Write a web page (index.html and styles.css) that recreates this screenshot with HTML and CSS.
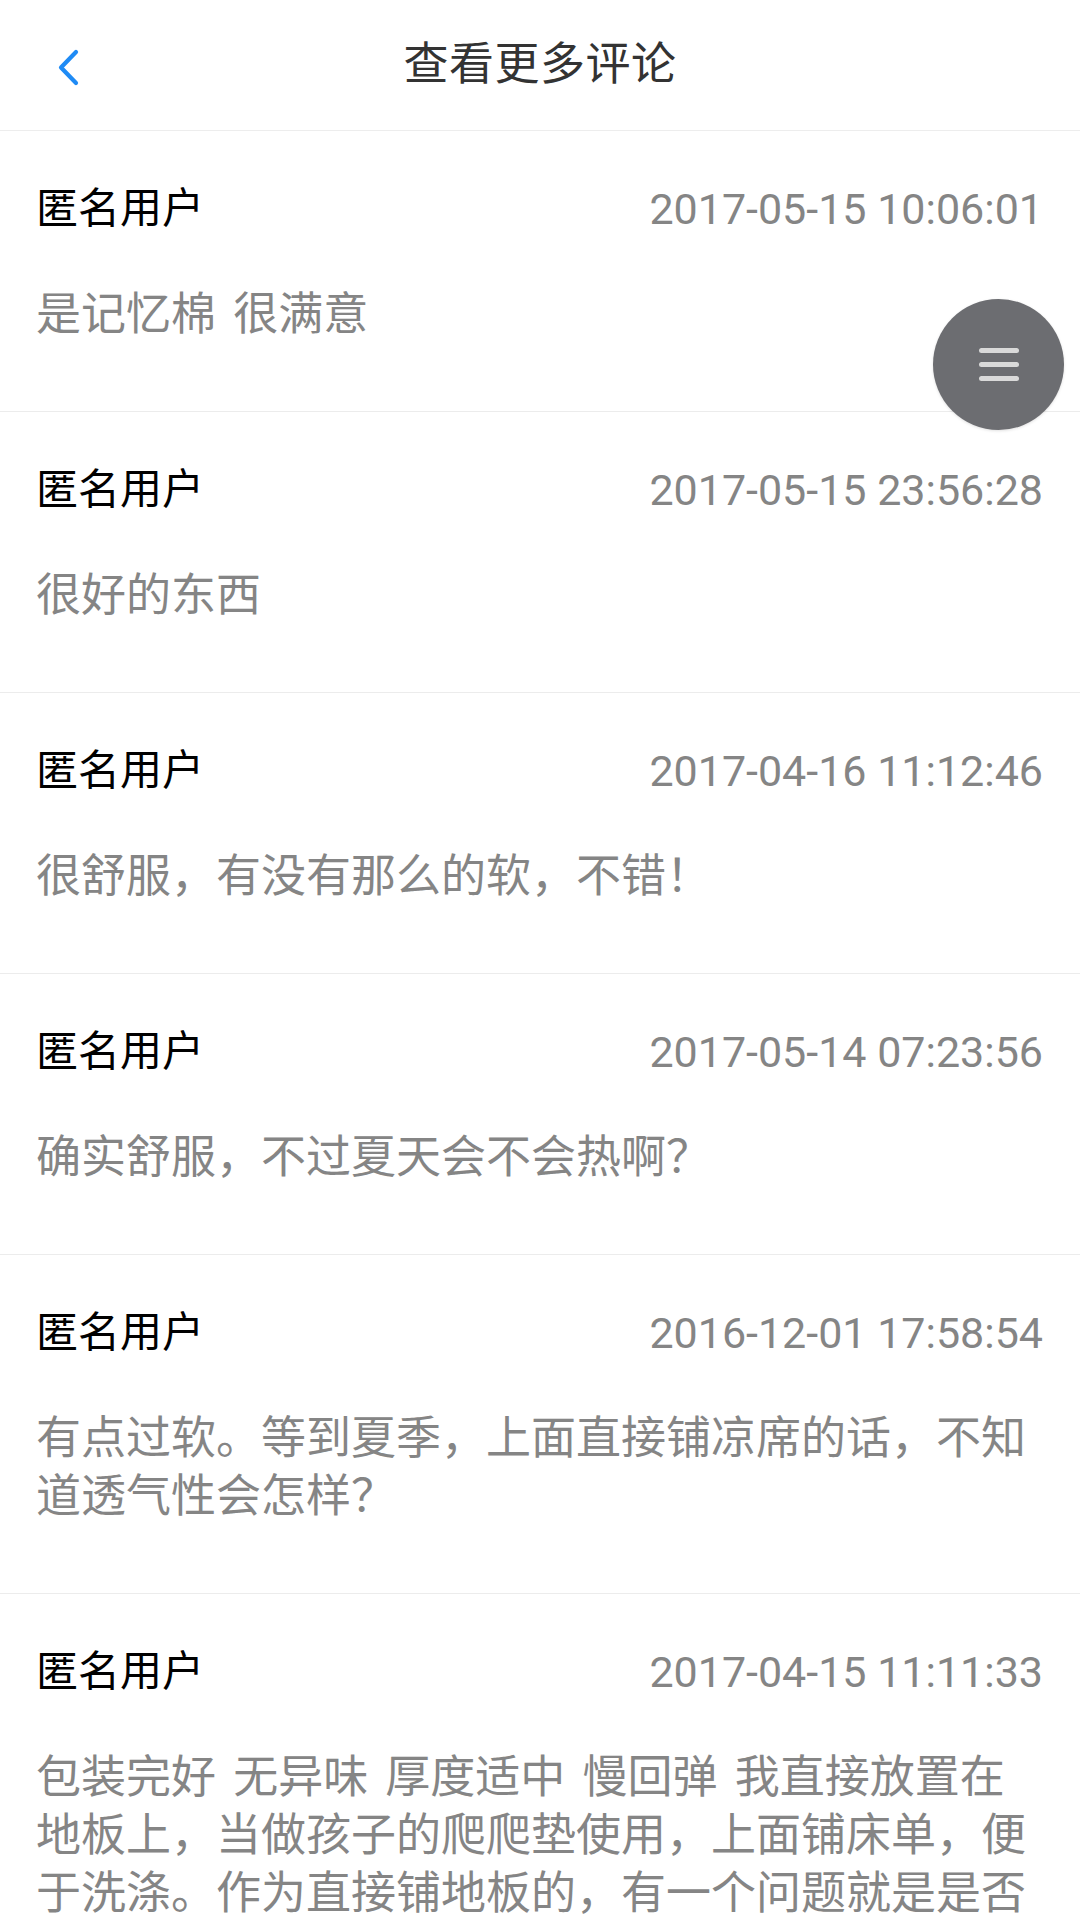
FILE: index.html
```html
<!DOCTYPE html>
<html lang="zh-CN">
<head>
<meta charset="utf-8">
<title>查看更多评论</title>
<link rel="stylesheet" href="styles.css">
</head>
<body>
<div class="page">
  <header class="topbar">
    <a class="back" aria-label="返回">
      <svg width="24" height="40" viewBox="0 0 24 40"><polyline points="19,3 4,18.5 19,34" fill="none" stroke="#1f8bf5" stroke-width="4.2" stroke-linecap="round" stroke-linejoin="round"/></svg>
    </a>
    <h1 class="title">查看更多评论</h1>
  </header>

  <ul class="list">
    <li class="item">
      <div class="meta"><span class="user">匿名用户</span><span class="time">2017-05-15 10:06:01</span></div>
      <p class="text">是记忆棉 很满意</p>
    </li>
    <li class="item">
      <div class="meta"><span class="user">匿名用户</span><span class="time">2017-05-15 23:56:28</span></div>
      <p class="text">很好的东西</p>
    </li>
    <li class="item">
      <div class="meta"><span class="user">匿名用户</span><span class="time">2017-04-16 11:12:46</span></div>
      <p class="text">很舒服，有没有那么的软，不错！</p>
    </li>
    <li class="item">
      <div class="meta"><span class="user">匿名用户</span><span class="time">2017-05-14 07:23:56</span></div>
      <p class="text">确实舒服，不过夏天会不会热啊？</p>
    </li>
    <li class="item">
      <div class="meta"><span class="user">匿名用户</span><span class="time">2016-12-01 17:58:54</span></div>
      <p class="text">有点过软。等到夏季，上面直接铺凉席的话，不知道透气性会怎样？</p>
    </li>
    <li class="item">
      <div class="meta"><span class="user">匿名用户</span><span class="time">2017-04-15 11:11:33</span></div>
      <p class="text">包装完好 无异味 厚度适中 慢回弹 我直接放置在地板上，当做孩子的爬爬垫使用，上面铺床单，便于洗涤。作为直接铺地板的，有一个问题就是是否会返潮。</p>
    </li>
  </ul>

  <button class="fab" aria-label="菜单">
    <span class="bar"></span><span class="bar"></span><span class="bar"></span>
  </button>
</div>
</body>
</html>
```

FILE: styles.css
```css
* { box-sizing: border-box; }
html, body {
  margin: 0;
  padding: 0;
  background: #ffffff;
}
body {
  font-family: Roboto, "Noto Sans CJK SC", sans-serif;
  width: 1080px;
  height: 1920px;
  overflow: hidden;
}
.page {
  position: relative;
  width: 1080px;
}
.topbar {
  height: 131px;
  border-bottom: 1px solid #ededed;
  display: flex;
  align-items: center;
  justify-content: center;
  position: relative;
}
.back {
  position: absolute;
  left: 57px;
  top: 49px;
  display: block;
  width: 24px;
  height: 40px;
}
.back svg { display: block; }
.title {
  margin: 0;
  font-size: 45px;
  font-weight: 400;
  color: #333333;
  line-height: 60px;
  letter-spacing: 0.5px;
}
.list {
  list-style: none;
  margin: 0;
  padding: 0;
}
.item {
  padding: 53px 37px 67px 36px;
  border-bottom: 1px solid #ececec;
  display: flex;
  flex-direction: column;
  gap: 52px;
}
.meta {
  display: flex;
  justify-content: space-between;
  align-items: center;
  height: 50px;
}
.user {
  font-size: 42px;
  color: #000000;
  line-height: 50px;
}
.time {
  font-size: 43px;
  color: #858585;
  line-height: 50px;
}
.text {
  margin: 0;
  font-size: 45px;
  line-height: 58px;
  color: #858585;
  word-spacing: 6px;
}
.fab {
  position: absolute;
  left: 933px;
  top: 299px;
  width: 131px;
  height: 131px;
  border-radius: 50%;
  background: #6c6d71;
  border: none;
  padding: 0;
  display: flex;
  flex-direction: column;
  align-items: center;
  justify-content: center;
  gap: 9px;
  box-shadow: 0 1px 3px rgba(0,0,0,0.12);
}
.fab .bar {
  display: block;
  width: 40px;
  height: 5px;
  border-radius: 3px;
  background: #d9d9d9;
}
```
